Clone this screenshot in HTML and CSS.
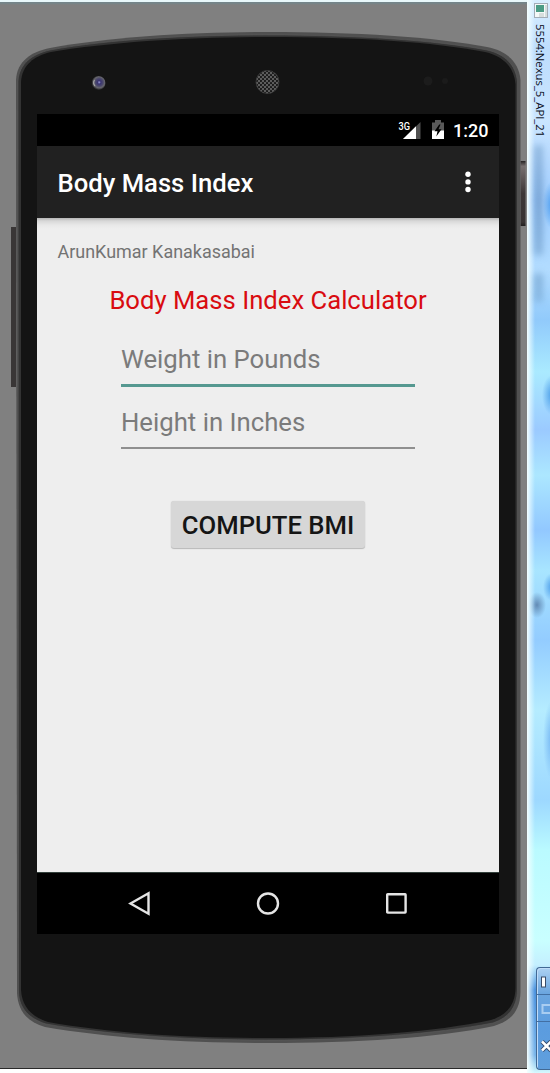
FILE: index.html
```html
<!DOCTYPE html>
<html lang="en">
<head>
<meta charset="utf-8">
<title>5554:Nexus_5_API_21</title>
<link rel="stylesheet" href="styles.css">
</head>
<body>
<div class="window">
  <main class="emulator">
    <svg class="shell" viewBox="0 0 527 1073" aria-hidden="true">
      <defs>
        <linearGradient id="key" x1="0" y1="0" x2="0" y2="1">
          <stop offset="0" stop-color="#252222"/><stop offset=".08" stop-color="#777070"/><stop offset=".5" stop-color="#3c3636"/><stop offset=".94" stop-color="#383333"/><stop offset="1" stop-color="#201e1e"/>
        </linearGradient>
        <radialGradient id="lens" cx=".55" cy=".45" r=".55">
          <stop offset="0" stop-color="#9c9cd8"/><stop offset=".22" stop-color="#393470"/><stop offset=".5" stop-color="#4c496c"/><stop offset=".72" stop-color="#66666c"/><stop offset="1" stop-color="#1b1b1d"/>
        </radialGradient>
        <pattern id="mesh" width="4" height="4" patternUnits="userSpaceOnUse">
          <rect width="4" height="4" fill="#5c5c5c"/><circle cx="1" cy="1" r="1.05" fill="#151515"/><circle cx="3" cy="3" r="1.05" fill="#151515"/>
        </pattern>
      </defs>
      <rect x="11" y="227" width="5" height="160" fill="#393636"/>
      <rect x="520.500" y="161" width="5" height="65" fill="url(#key)"/>
      <path d="M16 80C17 61 31 52 50 48C110 37 190 32 268 32C355 32 435 37 487 47C507 51 519 62 520.500 80V992C520 1011 511 1021 494 1026C436 1038 355 1043 268 1043C186 1043 109 1038 45 1027C28 1022 18 1012 17 993Z" fill="#505050"/>
      <path d="M18 81C19 64 32 54 50 50C110 39 190 35 268 35C355 35 435 40 487 50C505 54 516 65 517.500 82V990C517 1008 508 1018 493 1023C435 1034 355 1040 268 1040C186 1040 109 1035 46 1024C30 1019 19 1009 18.500 992Z" fill="#333" stroke="#5a5a5a" stroke-width=".6"/>
      <path d="M21 82C22 65 34 56 51 52C111 42 190 37 268 37C355 37 434 42 485 52C503 56 514 67 515.500 84V988C515 1006 506 1015 491 1020C434 1032 354 1038 268 1038C186 1038 110 1033 48 1022C32 1017 22 1007 21 990Z" fill="#141414"/>
      <circle cx="98.500" cy="83" r="7" fill="url(#lens)"/>
      <path d="M94.500 80a5 5 0 0 0 .5 6" fill="none" stroke="#a5a5a5" stroke-width="1.200"/>
      <circle cx="267.500" cy="82" r="11.500" fill="url(#mesh)" stroke="#3e3e3e" stroke-width=".8"/>
      <circle cx="428" cy="81" r="4.500" fill="#1c1c1c"/><circle cx="445" cy="81" r="3" fill="#1b1b1b"/>
    </svg>
    <div class="screen">
      <header class="status">
        <svg class="signal" viewBox="0 0 24 20">
          <text x=".5" y="9.500" class="network" textLength="11.500" lengthAdjust="spacingAndGlyphs">3G</text>
          <path d="M5 19L22.500 2V19Z" fill="#505050"/><path d="M5 19L18 6.300V19Z" fill="#fff"/>
        </svg>
        <svg class="battery" viewBox="0 0 12 19">
          <path d="M0 2.500H3V0H9V2.500H12V11H0Z" fill="#5a5a5a"/><path d="M0 10.500H12V19H0Z" fill="#fff"/>
          <path d="M7.200 4.500L2.500 11.200H5.500L4.300 16.500L9.500 9.200H6.500L8.500 4.500Z" fill="#000"/>
        </svg>
        <span class="clock">1:20</span>
      </header>
      <div class="appbar">
        <h1 class="app-title">Body Mass Index</h1>
        <svg class="more" viewBox="0 0 6 22"><circle cx="3" cy="3.300" r="2.700"/><circle cx="3" cy="10.900" r="2.700"/><circle cx="3" cy="18.500" r="2.700"/></svg>
      </div>
      <section class="content">
        <p class="author">ArunKumar Kanakasabai</p>
        <h2 class="heading">Body Mass Index Calculator</h2>
        <div class="field focused">Weight in Pounds</div>
        <div class="field">Height in Inches</div>
        <button class="compute">COMPUTE BMI</button>
      </section>
      <nav class="nav">
        <svg class="nav-icon" viewBox="0 0 26 26"><path d="M3.500 12.500L21.500 2.300V22.700Z"/></svg>
        <svg class="nav-icon" viewBox="0 0 26 26"><circle cx="13" cy="12.500" r="10"/></svg>
        <svg class="nav-icon" viewBox="0 0 26 26"><rect x="3.200" y="3.200" width="18.400" height="18.400" rx=".5"/></svg>
      </nav>
    </div>
  </main>
  <aside class="titlebar">
    <svg class="app-icon" viewBox="0 0 14 16"><rect x=".5" y=".5" width="13" height="14" fill="#f4f8f7" stroke="#a3adb7"/><rect x="2" y="2" width="8" height="7" fill="#4b9c85"/><rect x="5" y="10" width="5" height="4" fill="#d7dedd"/><path d="M12 2V14" stroke="#b7c4c4"/></svg>
    <span class="window-title">5554:Nexus_5_API_21</span>
    <div class="ghost"></div>
    <div class="controls">
      <div class="control"><svg viewBox="0 0 14 14"><rect x="4.500" y="2" width="4" height="10" fill="#fff" stroke="#3a4c68"/></svg></div>
      <div class="control"><svg viewBox="0 0 14 14"><rect x="5.500" y="3" width="10" height="8" fill="none" stroke="#a9cdf1" stroke-width="2"/></svg></div>
      <div class="control close"><svg viewBox="0 0 14 14"><path d="M5 2.500L14 11.500M14 2.500L5 11.500" stroke="#34496a" stroke-width="4.500"/><path d="M5 2.500L14 11.500M14 2.500L5 11.500" stroke="#fff" stroke-width="2.600"/></svg></div>
    </div>
  </aside>
</div>
</body>
</html>
```
FILE: styles.css
```css
* { box-sizing: border-box; }
body { margin: 0; font-family: Roboto, sans-serif; }
h1, h2, p { margin: 0; font-weight: 400; }
svg { display: block; flex: none; }
.window { display: grid; grid-template-columns: 527px 23px; width: 550px; height: 1073px; overflow: hidden; }
.emulator {
  position: relative;
  padding: 114px 28px 0 37px;
  background: linear-gradient(#e9f8fb 0 2px, #74858a 2px 3px, #808080 5px 1068px, #292929 1068px 1069px, #fff 1069px);
}
.shell { position: absolute; inset: 0; width: 527px; height: 1073px; }
.screen { position: relative; display: flex; flex-direction: column; height: 820px; width: 462px; background: #000; }
.status { display: flex; align-items: flex-start; height: 32px; padding: 6px 10px 0 0; justify-content: flex-end; color: #fff; }
.signal { width: 24px; height: 20px; margin-right: 10px; }
.network { font: 500 10px Roboto, sans-serif; fill: #fff; }
.battery { width: 12px; height: 19px; margin-right: 9px; }
.clock { width: 36px; font-size: 18px; font-weight: 500; line-height: 22px; white-space: nowrap; }
.appbar { display: flex; align-items: center; justify-content: space-between; height: 72px; padding: 0 28px 0 20.500px; background: #212121; color: #fff; }
.app-title { font-size: 25.670px; font-weight: 500; line-height: 36px; padding-top: 2px; }
.more { width: 6px; height: 22px; fill: #fff; }
.content {
  display: flex;
  flex-direction: column;
  align-items: center;
  height: 654px;
  padding-top: 22px;
  background: linear-gradient(#b6b6b6, #d8d8d8 3px, #e8e8e8 7px, #eee 11px);
}
.author { align-self: flex-start; padding-left: 20.500px; font-size: 17.970px; line-height: 24px; color: #737373; }
.heading { margin-top: 18px; font-size: 25.670px; line-height: 36px; color: #d90b10; white-space: nowrap; }
.field { width: 294px; height: 62px; padding-top: 19px; border-bottom: 2px solid #8f8f8f; font-size: 25.720px; line-height: 32px; color: #7b7b7b; }
.field.focused { height: 69px; padding-top: 25px; border-bottom: 3px solid #559890; }
.compute {
  width: 194px;
  height: 47px;
  margin-top: 52px;
  padding: 1px 0 0;
  border: 0;
  border-radius: 3px;
  background: #d7d7d7;
  box-shadow: 0 1px 1px #b9b9b9, 0 0 1px #ccc;
  color: #151515;
  font: 500 25.670px/46px Roboto, sans-serif;
  white-space: nowrap;
}
.nav { display: flex; justify-content: center; gap: 102.500px; height: 62px; padding-top: 18px; border-top: 1px solid #33403b; }
.nav-icon { width: 26px; height: 26px; fill: none; stroke: #e5e5e5; stroke-width: 2.400; }
.titlebar {
  display: flex;
  flex-direction: column;
  overflow: hidden;
  background:
    linear-gradient(90deg, #f4ffff, #f4ffff99 3px, transparent 8px),
    radial-gradient(ellipse 9px 24px at 25px 205px, #4c9eef, transparent),
    radial-gradient(ellipse 10px 20px at 25px 395px, #4a9de8, transparent),
    radial-gradient(ellipse 9px 14px at 25px 587px, #4b9de9, transparent),
    radial-gradient(ellipse 9px 13px at 10px 605px, #638bb5, transparent),
    radial-gradient(ellipse 9px 40px at 25px 740px, #73b5f3, transparent),
    linear-gradient(#d8eeff 0, #bdddfd 50px, #cae5ff 120px, #a1ceff 200px, #b2dcff 270px, #91cafb 320px, #aaeaff 372px, #9bcaff 430px, #ace7ff 475px, #92c8ff 530px, #a8e5ff 570px, #93ccff 640px, #b5ecff 710px, #9dd8ff 800px, #bafaff 850px, #c9ffff 940px, #c4efff 965px, #4991df 990px, #77b4ea 1055px, #d6faff 1073px);
}
.app-icon { width: 14px; height: 16px; margin: 3px 0 0 7px; }
.window-title { width: 15px; height: 118px; margin: 5px 0 0 6px; writing-mode: vertical-rl; font: 11.300px/15px "Open Sans", sans-serif; white-space: nowrap; color: #080c18; }
.ghost { width: 9px; height: 157px; margin: 3px 0 0 7px; background: linear-gradient(#5d8bb866, #608bbb99 35%, #5d8bb877 68%, transparent 72% 80%, #5d8bb877 84%, #5d8bb855); filter: blur(3px); flex: none; }
.controls { height: 103px; margin: auto 0 3px 9px; border: 1px solid #426994; border-right: 0; border-radius: 4px 0 0 4px; background: linear-gradient(#acd1f2, #6ba5df 25%, #5b9cdf 60%, #609fdd); box-shadow: inset 1px 1px #c0ddfa; }
.control { height: 27px; padding: 7px 0 0; border-bottom: 1px solid #426fa3; }
.control svg { width: 14px; height: 14px; }
.control.close { height: 46px; padding-top: 17px; border: 0; }
```
